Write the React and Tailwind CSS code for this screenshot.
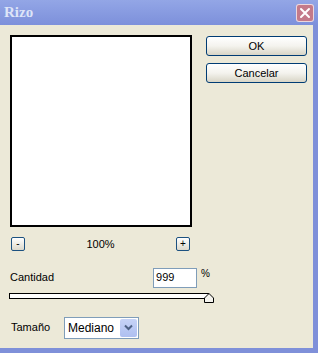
import React from 'react';

const XpButton = ({ children }) => (
    <button className="w-[101px] h-[20px] rounded-[3px] border border-[#003c74] bg-gradient-to-b from-white via-[#f4f3ee] to-[#d8d5c6] text-[11px] text-black flex items-center justify-center">
        {children}
    </button>
);

const SmallBtn = ({ children }) => (
    <div className="w-[14px] h-[14px] rounded-[2px] border border-[#1c5180] bg-gradient-to-b from-white to-[#dcd9cc] flex items-center justify-center text-[10px] leading-none text-black">
        {children}
    </div>
);

export default function App() {
    return (
        <div className="w-[318px] h-[353px] flex flex-col bg-[#7f90d9] overflow-hidden" style={{ fontFamily: '"Liberation Sans", Arial, sans-serif' }}>
            {/* title bar */}
            <div className="h-[25px] flex items-center justify-between pl-[4px] pr-[4px] bg-gradient-to-b from-[#93a6e6] to-[#7d90db]">
                <span className="text-[15px] font-bold text-[#dde4f8]" style={{ fontFamily: '"Liberation Serif", serif' }}>Rizo</span>
                <div className="w-[18px] h-[18px] rounded-[3px] border border-white/70 bg-[#c47a8a] flex items-center justify-center">
                    <svg width="12" height="12" viewBox="0 0 12 12">
                        <path d="M2 2 L10 10 M10 2 L2 10" stroke="white" strokeWidth="2" strokeLinecap="round" />
                    </svg>
                </div>
            </div>

            {/* body */}
            <div className="flex-1 mr-[5px] mb-[5px] bg-[#ece9d8] pl-[10px] pt-[10px] flex flex-col text-[11px] text-black">
                <div className="flex">
                    <div className="flex flex-col">
                        <div className="w-[182px] h-[192px] bg-white border-2 border-black" />
                        <div className="mt-[9px] flex items-center justify-between pl-[1px] pr-[2px]">
                            <SmallBtn>-</SmallBtn>
                            <span className="text-[11px]">100%</span>
                            <SmallBtn>+</SmallBtn>
                        </div>
                    </div>
                    <div className="ml-[14px] pt-[1px] flex flex-col gap-[7px]">
                        <XpButton>OK</XpButton>
                        <XpButton>Cancelar</XpButton>
                    </div>
                </div>

                {/* Cantidad */}
                <div className="mt-[15px] flex items-center w-[200px]">
                    <span className="flex-1">Cantidad</span>
                    <div className="w-[44px] h-[20px] bg-white border border-[#7f9db9] flex items-center pl-[2px] text-[11px]">999</div>
                    <span className="ml-[4px] self-start -mt-[2px] text-[10px]">%</span>
                </div>

                {/* slider */}
                <div className="relative mt-[5px] w-[204px] h-[10px] -ml-[1px]">
                    <div className="w-[200px] h-[6px] bg-white border border-black" />
                    <svg className="absolute left-[195px] top-0" width="10" height="10" viewBox="0 0 10 10">
                        <path d="M0.5 9.5 L0.5 5 L5 0.5 L9.5 5 L9.5 9.5 Z" fill="#f4f3ee" stroke="black" />
                    </svg>
                </div>

                {/* Tamaño */}
                <div className="mt-[14px] flex items-center">
                    <span className="ml-[1px] w-[53px]">Tamaño</span>
                    <div className="w-[75px] h-[22px] bg-white border border-[#7f9db9] flex items-center justify-between pl-[3px] pr-[1px]">
                        <span className="text-[12px]">Mediano</span>
                        <div className="w-[17px] h-[18px] rounded-[2px] bg-gradient-to-b from-[#c6d3f7] to-[#aebff0] flex items-center justify-center">
                            <svg width="9" height="7" viewBox="0 0 9 7">
                                <path d="M1 1.5 L4.5 5 L8 1.5" fill="none" stroke="#4d6185" strokeWidth="2" />
                            </svg>
                        </div>
                    </div>
                </div>
            </div>
        </div>
    );
}
